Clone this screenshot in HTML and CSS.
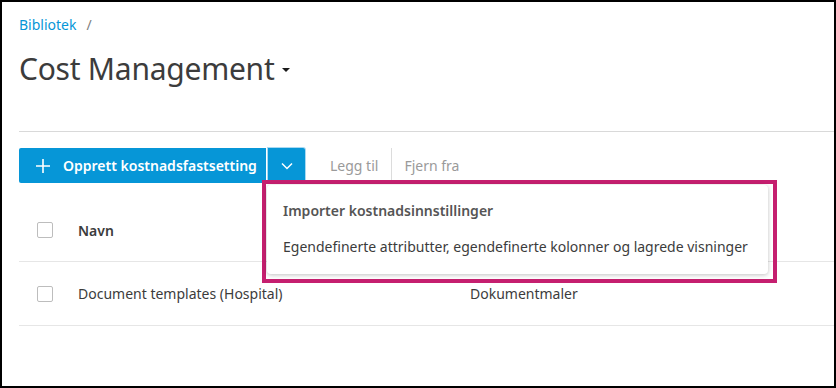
FILE: index.html
```html
<!DOCTYPE html>
<html>
<head>
<meta charset="utf-8">
<link rel="stylesheet" href="styles.css">
</head>
<body>
<div class="frame">
  <div class="page">
    <nav class="crumbs"><a class="crumb">Bibliotek</a><span class="sep">/</span></nav>
    <h1 class="title">Cost Management <span class="caret"></span></h1>
    <div class="rule"></div>
    <div class="toolbar">
      <div class="split">
        <button class="btn-main">
          <svg class="plus" width="16" height="16" viewBox="0 0 16 16"><path d="M8 1v14M1 8h14" stroke="#fff" stroke-width="1.6" fill="none"/></svg>
          <span>Opprett kostnadsfastsetting</span>
        </button>
        <button class="btn-drop">
          <svg width="12" height="8" viewBox="0 0 12 8"><path d="M1 1.5l5 5 5-5" stroke="#fff" stroke-width="1.5" fill="none"/></svg>
        </button>
        <div class="highlight">
          <div class="menu">
            <div class="menu-item strong">Importer kostnadsinnstillinger</div>
            <div class="menu-item">Egendefinerte attributter, egendefinerte kolonner og lagrede visninger</div>
          </div>
        </div>
      </div>
      <span class="action first">Legg til</span>
      <span class="divider"></span>
      <span class="action">Fjern fra</span>
    </div>
    <div class="table">
      <div class="row head">
        <span class="check"></span>
        <span class="col-name">Navn</span>
        <span class="col-type"></span>
      </div>
      <div class="row">
        <span class="check"></span>
        <span class="col-name">Document templates (Hospital)</span>
        <span class="col-type">Dokumentmaler</span>
      </div>
    </div>
  </div>
</div>
</body>
</html>
```

FILE: styles.css
```css
* { box-sizing: border-box; }
html, body { margin: 0; padding: 0; }
body {
  width: 836px;
  height: 388px;
  font-family: "Noto Sans", sans-serif;
  color: #3c3c3c;
  background: #000;
}
.frame {
  margin: 2px;
  width: 832px;
  height: 384px;
  background: #fff;
  overflow: hidden;
}
.page {
  padding: 13px 0 0 17px;
}
.crumbs {
  display: flex;
  gap: 10px;
  font-size: 14px;
  line-height: 20px;
  height: 20px;
}
.crumb { color: #0696d7; }
.sep { color: #808080; }
.title {
  margin: 14px 0 0 0;
  font-size: 30px;
  line-height: 40px;
  font-weight: 400;
  letter-spacing: -0.25px;
  color: #3c3c3c;
  display: flex;
  align-items: center;
}
.caret {
  display: inline-block;
  margin-left: 8px;
  margin-top: 2px;
  width: 0; height: 0;
  border-left: 4px solid transparent;
  border-right: 4px solid transparent;
  border-top: 4px solid #1a1a1a;
}
.rule {
  margin-top: 42px;
  height: 1px;
  background: #d9d9d9;
}
.toolbar {
  margin-top: 16px;
  display: flex;
  align-items: center;
  height: 35px;
}
.split {
  position: relative;
  display: flex;
  height: 35px;
}
button {
  font-family: inherit;
  border: 0;
  margin: 0;
  cursor: pointer;
}
.btn-main {
  width: 247px;
  height: 35px;
  background: #0696d7;
  color: #fff;
  font-size: 14px;
  font-weight: 600;
  display: flex;
  align-items: center;
  gap: 12px;
  padding: 0 0 0 16px;
  border-radius: 2px 0 0 2px;
}
.btn-drop {
  width: 37px;
  height: 35px;
  margin-left: 2px;
  background: #0696d7;
  border-radius: 0 2px 2px 0;
  box-shadow: 0 0 0 1px #a8d9f2;
  display: flex;
  align-items: center;
  justify-content: center;
}
.highlight {
  position: absolute;
  left: 243px;
  top: 32px;
  width: 515px;
  height: 103px;
  border: 4px solid #c51f6f;
  padding: 1px 5px 5px 1px;
}
.menu {
  background: #fff;
  border-radius: 4px;
  box-shadow: 0 1px 4px rgba(0,0,0,0.25);
  height: 89px;
  padding: 16px 16px 0 16px;
}
.menu-item {
  font-size: 14px;
  line-height: 20px;
  color: #3c3c3c;
  margin-bottom: 16px;
}
.menu-item.strong { font-weight: 600; color: #555; }
.action {
  color: #9a9a9a;
  font-size: 14px;
  padding: 0 12px;
}
.action.first { margin-left: 13px; padding-right: 13px; }
.divider {
  width: 1px;
  height: 35px;
  background: #dcdcdc;
}
.table {
  margin-top: 16px;
}
.row {
  display: flex;
  align-items: center;
  height: 64px;
  border-bottom: 1px solid #e6e6e6;
  font-size: 14px;
}
.row.head { height: 63px; }
.head .col-name { font-weight: 600; }
.check {
  width: 16px;
  height: 16px;
  border: 1px solid #bdbdbd;
  border-radius: 2px;
  margin-left: 18px;
  margin-right: 25px;
}
.col-name { width: 392px; }
```
